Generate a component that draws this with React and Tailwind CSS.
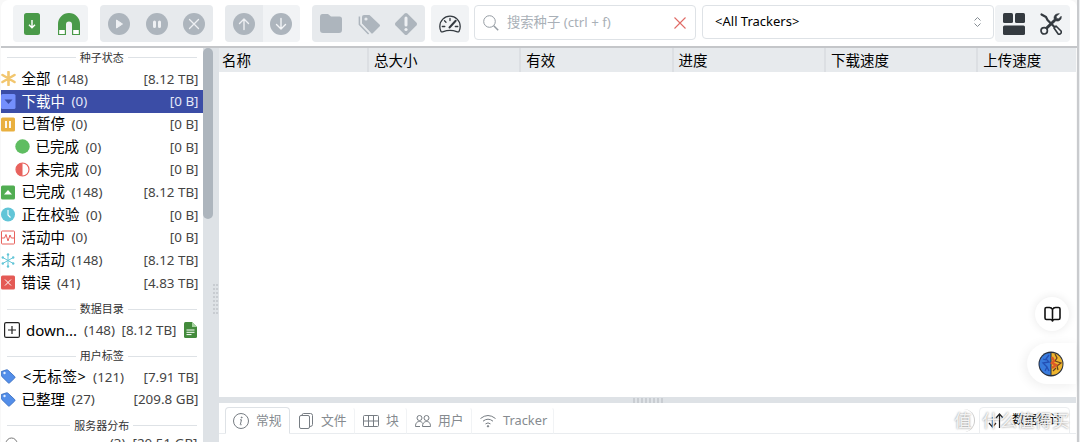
import clsx from 'clsx';

const columns = ['名称', '总大小', '有效', '进度', '下载速度', '上传速度'];

const statusRows = [
  { icon: 'all', label: '全部', count: 148, size: '8.12 TB' },
  { icon: 'down', label: '下载中', count: 0, size: '0 B', active: true },
  { icon: 'pause', label: '已暂停', count: 0, size: '0 B' },
  { icon: 'dot', label: '已完成', count: 0, size: '0 B', nested: true },
  { icon: 'half', label: '未完成', count: 0, size: '0 B', nested: true },
  { icon: 'up', label: '已完成', count: 148, size: '8.12 TB' },
  { icon: 'clock', label: '正在校验', count: 0, size: '0 B' },
  { icon: 'pulse', label: '活动中', count: 0, size: '0 B' },
  { icon: 'snow', label: '未活动', count: 148, size: '8.12 TB' },
  { icon: 'error', label: '错误', count: 41, size: '4.83 TB' },
];

const labelRows = [
  { icon: 'tag', label: '<无标签>', count: 121, size: '7.91 TB', wide: true },
  { icon: 'tag', label: '已整理', count: 27, size: '209.8 GB' },
];

const tabs = [
  { icon: 'info', label: '常规', width: 'w-[65px]', active: true },
  { icon: 'files', label: '文件', width: 'w-[65px]' },
  { icon: 'grid', label: '块', width: 'w-[52px]' },
  { icon: 'users', label: '用户', width: 'w-[65px]' },
  { icon: 'wifi', label: 'Tracker', width: 'w-[82px]' },
];

export default function App() {
  return (
    <div className="flex h-[442px] w-[1080px] overflow-hidden bg-[#eceef0] font-['Noto_Sans','Noto_Sans_CJK_SC',sans-serif] text-black">
      <div className="flex w-[1079px] flex-col border-r-2 border-[#c9cbce] bg-[#f8f8f8] pl-px">
        <Toolbar />
        <div className="flex min-h-0 flex-1">
          <Sidebar />
          <main className="flex w-[857px] flex-col bg-white">
            <div className="flex h-[24px] shrink-0 bg-[#e7eaed]">
              {columns.map((name) => (
                <div key={name} className="w-[152.3px] shrink-0 overflow-hidden border-r-2 border-[#dcdfe3] pl-[5px] text-[14.5px] leading-[25px] first:w-[150px] first:pl-[3px] last:w-[96px] last:border-0">{name}</div>
              ))}
            </div>
            <div className="flex-1" />
            <div className="flex h-[6px] shrink-0 items-center justify-center gap-[2px] bg-[#dee2e6]">
              {[...Array(8)].map((_, i) => <span key={i} className="h-[5px] w-[2px] bg-[#c9cdd2]" />)}
            </div>
            <BottomTabs />
          </main>
        </div>
      </div>
      <FloatingButtons />
    </div>
  );
}

function Toolbar() {
  return (
    <header className="flex h-[48px] shrink-0 items-start rounded-t-lg border-b-2 border-[#c4c6c9] bg-white pl-[12px] pt-[5px]">
      <Group tone="light">
        <Tool>
          <rect x="3" y="0" width="16" height="22" rx="2.5" fill="#4a9a49" />
          <path d="M11 7v7.5M8 11.8l3 3 3-3" fill="none" stroke="#fff" strokeWidth="1.4" />
        </Tool>
        <Tool>
          <path d="M0 22V11a11 11 0 0 1 22 0v11h-8V11.500a3 3 0 0 0-6 0V22Z" fill="#4a9a49" />
          <path d="M1.200 17h5.600v4H1.200ZM15.200 17h5.600v4h-5.600Z" fill="#fff" />
        </Tool>
      </Group>
      <Group tone="dark" className="ml-[12px]">
        <Tool><circle cx="11" cy="11" r="11" fill="#adb5bd" /><path d="M8.500 7v8l6-4Z" fill="#eef0f3" stroke="#eef0f3" strokeLinejoin="round" /></Tool>
        <Tool><circle cx="11" cy="11" r="11" fill="#adb5bd" /><path d="M8.500 9v4.500M13.500 9v4.500" stroke="#eef0f3" strokeWidth="3" strokeLinecap="round" /></Tool>
        <Tool><circle cx="11" cy="11" r="11" fill="#adb5bd" /><path d="m6.500 6.500 9 9m0-9-9 9" stroke="#eef0f3" strokeWidth="1.3" strokeLinecap="round" /></Tool>
      </Group>
      <div className="ml-[12px] flex overflow-hidden rounded">
        <Group tone="dark" square><Tool><circle cx="11" cy="11" r="11" fill="#adb5bd" /><path d="M11 16.500V6M6.500 10.500 11 6l4.500 4.500" fill="none" stroke="#eef0f3" strokeWidth="1.400" strokeLinecap="round" strokeLinejoin="round" /></Tool></Group>
        <Group tone="light" square><Tool><circle cx="11" cy="11" r="11" fill="#adb5bd" /><path d="M11 5.500V16m-4.500-4.500L11 16l4.500-4.500" fill="none" stroke="#f3f5f7" strokeWidth="1.400" strokeLinecap="round" strokeLinejoin="round" /></Tool></Group>
      </div>
      <Group tone="dark" className="ml-[12px]">
        <Tool><path d="M0 4q0-3 2.500-3h5.500l3 2.500h8.500q2.500 0 2.500 2.500v11q0 3-3 3H3q-3 0-3-3Z" fill="#adb5bd" /></Tool>
        <Tool>
          <path d="M4 4q0-2 2-2h5.500l10 9.500q1 1 0 2L15 20q-1 1-2 0L4 10.500Z" fill="#adb5bd" />
          <circle cx="8" cy="6" r="1.600" fill="#e7eaed" />
          <path d="M3.500 4.500v6.300l9 9.500" fill="none" stroke="#e7eaed" strokeWidth="1" />
          <path d="M1.400 3.500v8l9.200 9.500" fill="none" stroke="#adb5bd" strokeWidth="1.500" />
        </Tool>
        <Tool><path d="M9.600.6q1.400-1.200 2.800 0l9 9q1.200 1.400 0 2.800l-9 9q-1.400 1.200-2.800 0l-9-9q-1.200-1.400 0-2.800Z" fill="#adb5bd" /><path d="M11 5v7" stroke="#eef0f3" strokeWidth="3" strokeLinecap="round" /><circle cx="11" cy="16.500" r="1.600" fill="#eef0f3" /></Tool>
      </Group>
      <Group tone="light" className="ml-[6px]">
        <Tool>
          <g fill="none" stroke="#343a40" strokeWidth="1.300" strokeLinecap="round" strokeLinejoin="round">
            <path d="M2 18.500A11 11 0 0 1 .8 13.500C.8 7.500 5.500 3.200 11 3.200s10.200 4.300 10.200 10.300a11 11 0 0 1-1.200 5c-.7.600-1.500.400-2.300.100-4.500-1.500-9-1.500-13.400 0-.8.300-1.600.500-2.300-.1Z" />
            <path d="M11 5.500v2M5.500 7.700 7 9.200M3.300 13.500h2.500M16.300 13.500h2.500" />
            <path d="m10.500 14.500 6.200-6.700" strokeWidth="2" />
          </g>
        </Tool>
      </Group>
      <div className="ml-[5.500px] flex h-[35px] w-[222px] items-center rounded border border-[#dee2e6] bg-white pl-[8px] pr-[9px]">
        <svg className="size-[16px]" viewBox="0 0 16 16" fill="none" stroke="#959ca3" strokeWidth="1"><circle cx="6.500" cy="6.500" r="5.800" /><path d="m10.700 10.700 4.500 4.500" strokeWidth="1.500" /></svg>
        <span className="ml-[8px] flex-1 whitespace-nowrap text-[13.3px] text-[#a9b0b7]">搜索种子 (ctrl + f)</span>
        <svg className="size-[12px]" viewBox="0 0 12 12" stroke="#e06a65" strokeWidth="1.100"><path d="m.5.5 11 11m0-11-11 11" /></svg>
      </div>
      <div className="ml-[6px] flex h-[34px] w-[292px] items-center rounded border border-[#dee2e6] bg-white pl-[12px] pr-[12px]">
        <span className="flex-1 text-[13px]">&lt;All Trackers&gt;</span>
        <svg className="h-[10px] w-[7px]" viewBox="0 0 7 10" fill="none" stroke="#858c93" strokeWidth="1"><path d="m.5 3.500 3-3 3 3M.5 6.500l3 3 3-3" /></svg>
      </div>
      <Group tone="light" className="ml-px">
        <Tool><g fill="#343a40"><rect x="0" y="0" width="10" height="10" rx="1.500" /><rect x="12" y="0" width="10" height="10" rx="1.500" /><rect x="0" y="12.500" width="22" height="9.500" rx="1.500" /></g></Tool>
        <Tool>
          <g fill="none" stroke="#343a40" strokeLinecap="round" strokeLinejoin="round">
            <path d="M1.500 1.500 6 4l1.500 3 6.500 6.500" strokeWidth="2.200" />
            <path d="m14 15 2-2 5 5q.8 1.400-.3 2.500t-2.500.5Z" strokeWidth="1.600" />
            <path d="M14.500 7.500 6.500 15.300" strokeWidth="3" />
            <path d="M19 .8 16.200 3.400l.4 2 2 .4 2.600-2.600c.7 3.500-2.500 5.800-5.400 4.600l-1.500-1.500C13.200 3.400 15.500.2 19 .8Z" fill="#343a40" strokeWidth=".6" />
            <circle cx="4.200" cy="17.800" r="3.200" strokeWidth="1.700" fill="#f1f3f5" />
          </g>
        </Tool>
      </Group>
    </header>
  );
}

function Group({ tone, square, className, children }) {
  return (
    <div className={clsx('flex h-[37px] shrink-0', !square && 'rounded', tone === 'dark' ? 'bg-[#e7eaed]' : 'bg-[#f1f3f5]', className)}>
      {children}
    </div>
  );
}

function Tool({ children }) {
  return (
    <button type="button" className="flex w-[37.6px] items-center justify-center">
      <svg className="size-[22px]" viewBox="0 0 22 22">{children}</svg>
    </button>
  );
}

function Sidebar() {
  return (
    <aside className="flex w-[218px] shrink-0 overflow-hidden bg-[#dee2e6]">
      <div className="h-full w-[201.500px] shrink-0 overflow-hidden bg-white">
        <SectionTitle first>种子状态</SectionTitle>
        {statusRows.map((row, i) => <FilterRow key={i} {...row} />)}
        <SectionTitle>数据目录</SectionTitle>
        <div className="flex h-[22.6px] items-center whitespace-nowrap pl-[3px]">
          <svg className="size-[16px]" viewBox="0 0 16 16" fill="none" stroke="#222" strokeWidth="1.200"><rect x=".6" y=".6" width="14.800" height="14.800" rx="1.500" /><path d="M8 4v8M4 8h8" /></svg>
          <span className="ml-[6px] w-[58px] text-[15px]">down...</span>
          <span className="w-[37.500px] text-[13.4px] text-[#444]">(148)</span>
          <span className="w-[62px] text-[13.4px] text-[#444]">[8.12 TB]</span>
          <svg className="h-[16px] w-[13px]" viewBox="0 0 13 16"><path d="M1.500 0H8l5 5v9.500Q13 16 11.500 16h-10Q0 16 0 14.500v-13Q0 0 1.500 0Z" fill="#438b3c" /><path d="M8 0v5h5" fill="#a7d3a2" /><path d="M2.500 8h8M2.500 10.300h8M2.500 12.600h5" stroke="#fff" strokeWidth="1" /></svg>
        </div>
        <SectionTitle>用户标签</SectionTitle>
        {labelRows.map((row) => <FilterRow key={row.label} {...row} />)}
        <SectionTitle>服务器分布</SectionTitle>
        <div className="-mt-px flex items-start whitespace-nowrap pr-[5px] text-[13.4px] leading-[18px] text-[#444]">
          <svg className="ml-[4px] mt-[3px] size-[13px]" viewBox="0 0 13 13" fill="none" stroke="#777"><circle cx="6.500" cy="6.500" r="5.500" /></svg>
          <span className="ml-auto">(3)</span>
          <span className="ml-[7px]">[20.51 GB]</span>
        </div>
      </div>
      <div className="h-[171px] w-[10.500px] shrink-0 rounded-full bg-[#adb5bd]" />
      <div className="mt-[108px] grid h-[30px] w-[5px] grid-cols-2 content-between gap-x-px self-center">
        {[...Array(16)].map((_, i) => <span key={i} className="h-[2px] bg-[#c8ccd1]" />)}
      </div>
    </aside>
  );
}

function SectionTitle({ first, children }) {
  return (
    <div className={clsx('flex items-center gap-[4px] px-[6px] text-[11px] leading-[18px] text-[#333]', first ? 'h-[19.5px]' : 'h-[24.4px] pt-[6px]')}>
      <span className="h-px flex-1 bg-[#dee2e6]" />
      {children}
      <span className="h-px flex-1 bg-[#dee2e6]" />
    </div>
  );
}

function FilterRow({ icon, label, count, size, active, nested, wide }) {
  return (
    <div className={clsx('flex h-[22.66px] items-center whitespace-nowrap pr-[4px]', nested && 'pl-[14px]', active && 'bg-[#3b4da6] text-white')}>
      <svg className="size-[15px] shrink-0" viewBox="0 0 15 15"><RowIcon name={icon} /></svg>
      <span className={clsx('text-[14.5px]', wide ? 'ml-[7px] tracking-[0.7px]' : 'ml-[5.500px]')}>{label}</span>
      <span className={clsx('ml-[6.500px] flex-1 text-[13.4px]', active ? 'text-[#e4e8f8]' : 'text-[#444]')}>({count})</span>
      <span className={clsx('text-[13.4px]', active ? 'text-[#e4e8f8]' : 'text-[#444]')}>[{size}]</span>
    </div>
  );
}

function RowIcon({ name }) {
  switch (name) {
    case 'all':
      return <path d="M7.500 1v13M1.500 4l12 7M13.500 4l-12 7" stroke="#f2c66e" strokeWidth="2.600" strokeLinecap="round" />;
    case 'down':
      return <><rect width="14.500" height="15" rx="1.500" fill="#748ffc" /><path d="M3.500 5.500h8l-4 4.500Z" fill="#3b4da6" /></>;
    case 'pause':
      return <><rect y=".5" width="14" height="14" rx="1.500" fill="#e9b03f" /><path d="M5 4v7M9 4v7" stroke="#fff" strokeWidth="1.800" /></>;
    case 'dot':
      return <circle cx="7.500" cy="7.500" r="7.200" fill="#5fbd61" />;
    case 'half':
      return <><circle cx="7.500" cy="7.500" r="6.500" fill="#fff" stroke="#e8625d" strokeWidth="1.200" /><path d="M7.500 1a6.500 6.500 0 0 0 0 13Z" fill="#e8625d" /></>;
    case 'up':
      return <><rect y=".5" width="14" height="14" rx="1.500" fill="#51ad52" /><path d="m3 9.500 4-4.500 4 4.500Z" fill="#fff" /></>;
    case 'clock':
      return <><circle cx="7" cy="7.500" r="7" fill="#62c5d7" /><path d="M7 3v5l2.500 2.500" fill="none" stroke="#fff" strokeWidth="1.100" /></>;
    case 'pulse':
      return <g fill="none" stroke="#e8625d"><rect x=".5" y="1" width="13" height="13" rx=".8" /><path d="M1 8h2.500L5 4.500 7 11l2-6 1.300 3H13" /></g>;
    case 'snow':
      return (
        <g fill="none" stroke="#62c5d7">
          <path d="M7 1.500v12M1.800 4.500l10.400 6M12.200 4.500l-10.400 6" />
          <g fill="#62c5d7" stroke="none">
            <circle cx="7" cy="1.500" r="1.200" /><circle cx="7" cy="13.500" r="1.200" />
            <circle cx="1.800" cy="4.500" r="1.200" /><circle cx="12.200" cy="10.500" r="1.200" />
            <circle cx="12.200" cy="4.500" r="1.200" /><circle cx="1.800" cy="10.500" r="1.200" />
          </g>
        </g>
      );
    case 'error':
      return <><rect y=".5" width="14" height="14" rx="1.500" fill="#e45a55" /><path d="m4 4.500 6 6m0-6-6 6" stroke="#fff" /></>;
    default:
      return <><path d="M.3 2.500 5.500.8q1-.2 1.600.5l6.600 6.200q.7.800 0 1.600l-5 4.700q-.8.700-1.500 0L.8 7.500Q.3 7 .3 6Z" fill="#538ee9" stroke="#3569bd" strokeWidth=".8" /><circle cx="3.500" cy="4" r="1.200" fill="#e3efff" /></>;
  }
}

function BottomTabs() {
  return (
    <div className="flex h-[39px] shrink-0 flex-col">
      <div className="flex h-[31px] items-end border-b border-[#e9ecef] pl-[6px]">
        {tabs.map((tab) => (
          <div key={tab.label} className={clsx('-mb-px flex h-[27px] shrink-0 items-center gap-[7px] rounded-t border pl-[7px] text-[12.8px] whitespace-nowrap text-[#868b90]', tab.width, tab.active ? 'border-[#dee2e6] border-b-white bg-white' : 'border-transparent border-r-[#f1f3f5] border-b-[#e9ecef]')}>
            <svg className="size-[16px] shrink-0" viewBox="0 0 16 16" fill="none" stroke="#777d83" strokeWidth="1"><TabIcon name={tab.icon} /></svg>
            {tab.label}
          </div>
        ))}
        <div className="relative -mb-px ml-auto mr-[6px] flex h-[27px] w-[91px] items-center rounded-t border border-[#eceef0] pl-[8px] text-[12.5px] whitespace-nowrap">
          <svg className="mr-[8px] h-[15px] w-[16px]" viewBox="0 0 16 15" fill="none" stroke="#222" strokeWidth="1.200"><path d="M4.500 4v9.500M1 10l3.500 4L8 10M11.500 15V1.500M8 5l3.500-4L15 5" /></svg>
          数据统计
          {/* site mark laid over the statistics tab */}
          <div className="absolute -left-[28px] -top-px flex h-[27px] items-center gap-[7px] text-[17.5px] text-white/85 [text-shadow:0_0_2px_#777]">
            <span className="flex size-[23px] items-center justify-center rounded-full border-r border-[#ccc]">值</span>
            <span>什么值得买</span>
          </div>
        </div>
      </div>
    </div>
  );
}

function TabIcon({ name }) {
  switch (name) {
    case 'info':
      return <><circle cx="8" cy="8" r="7.500" /><path d="M7 6.800h1.500L7.300 11.500q0 .8 1.300.2" /><circle cx="8.700" cy="4.500" r=".5" fill="#777d83" /></>;
    case 'files':
      return <><rect x="1.500" y="2.500" width="10" height="13" rx="1.500" /><path d="M4 2.500Q4 .5 5.500.5h7Q14.500.5 14.500 2.500v9q0 2-2.500 2" /></>;
    case 'grid':
      return <><rect x=".5" y="2.500" width="15" height="11" rx="1" /><path d="M.5 8h15M5.500 2.500v11M10.500 2.500v11" /></>;
    case 'users':
      return <><circle cx="4.500" cy="5" r="2.500" /><circle cx="11.500" cy="5" r="2.500" /><path d="M.5 13.500c0-4 2-5 4-5s2.500 1 3.500 2c1-1.200 2-2 3.500-2 2 0 4 1 4 5H7.500c0-1.500.2-2.300.8-3.200M.5 13.500H5" /></>;
    default:
      return <><path d="M.5 5.500q7.500-6 15 0M3 8.200q5-4 10 0M5.500 10.900q2.500-2 5 0" /><circle cx="8" cy="13.300" r=".7" fill="#777d83" /></>;
  }
}

function FloatingButtons() {
  return (
    <div className="absolute left-[1027px] top-[297px] flex w-[49px] flex-col items-end">
      <div className="mr-[7px] flex size-[34px] items-center justify-center rounded-full bg-white shadow-[0_0_10px_#00000018]">
        <svg className="size-[17px]" viewBox="0 0 17 17" fill="none" stroke="#111" strokeWidth="1.600" strokeLinejoin="round"><path d="M8.500 3.500Q7.500 1.500 5.500 1.500H2.500Q1 1.500 1 3v9q0 1.500 1.500 1.500h4q1.500 0 2 1.500.5-1.500 2-1.500h4q1.500 0 1.500-1.500V3q0-1.500-1.500-1.500h-3q-2 0-3 2ZM8.500 3.500v12" /></svg>
      </div>
      <div className="mt-[12px] flex h-[41px] w-[49px] items-center rounded-l-full bg-white pl-[11px] shadow-[-2px_2px_12px_#00000012]">
        <svg className="size-[26px]" viewBox="0 0 26 26">
          <circle cx="13" cy="13" r="12.500" fill="#272e3c" />
          <path d="M12.500 2a11 11 0 0 0 0 22Z" fill="#397bdc" />
          <path d="M13.500 2a11 11 0 0 1 0 22Z" fill="#eeb52e" />
          <path d="M11 4 8 8l3 3-6 1 4 4-2 4M5 8l3 1M11 20l-2-4" fill="none" stroke="#234fb4" strokeWidth="1.300" />
          <path d="m17 3 2 4-2 3 6 2-4 3 1 4M15 20l3-3" fill="none" stroke="#674020" strokeWidth="1.200" />
          <path d="m14 6 2 4-2 2 4 2-4 3" fill="none" stroke="#db5b27" strokeWidth="2.400" />
        </svg>
      </div>
    </div>
  );
}
